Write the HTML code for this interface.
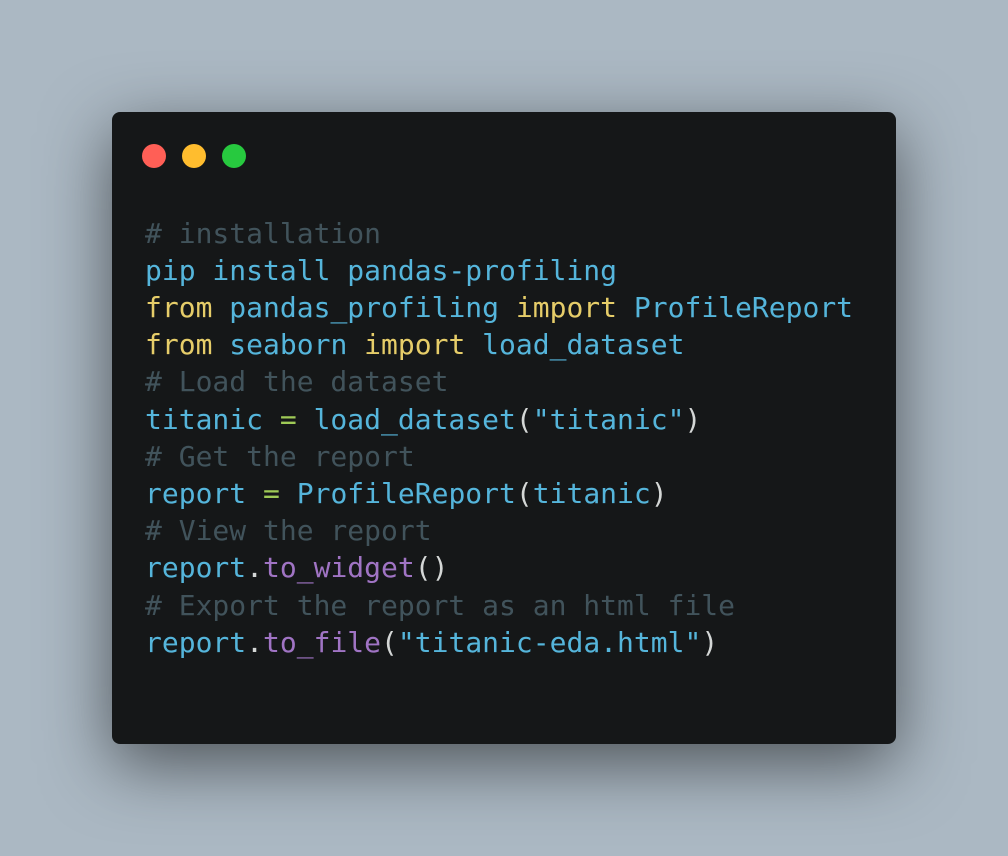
<!DOCTYPE html>
<html><head><meta charset="utf-8"><style>
html,body{margin:0;padding:0;}
body{width:1008px;height:856px;background:#abb8c3;position:relative;overflow:hidden;}
.win{position:absolute;left:112px;top:112px;width:784px;height:632px;background:#151718;border-radius:8px;box-shadow:0 20px 68px rgba(0,0,0,0.55);}
.dot{position:absolute;top:32px;width:24px;height:24px;border-radius:50%;}
pre{position:absolute;left:33px;top:102.5px;margin:0;font-family:"DejaVu Sans Mono","Liberation Mono",monospace;font-size:28px;line-height:37.2px;color:#55b5db;white-space:pre;}
.c{color:#41535b}.y{color:#e6cd69}.g{color:#9fca56}.p{color:#a074c4}.w{color:#d4d7d6}
</style></head><body>
<div class="win">
<div class="dot" style="left:30px;background:#ff5f56"></div>
<div class="dot" style="left:70px;background:#ffbd2e"></div>
<div class="dot" style="left:110px;background:#27c93f"></div>
<pre><span class="c"># installation</span>
pip install pandas-profiling
<span class="y">from</span> pandas_profiling <span class="y">import</span> ProfileReport
<span class="y">from</span> seaborn <span class="y">import</span> load_dataset
<span class="c"># Load the dataset</span>
titanic <span class="g">=</span> load_dataset<span class="w">(</span>"titanic"<span class="w">)</span>
<span class="c"># Get the report</span>
report <span class="g">=</span> ProfileReport<span class="w">(</span>titanic<span class="w">)</span>
<span class="c"># View the report</span>
report<span class="w">.</span><span class="p">to_widget</span><span class="w">()</span>
<span class="c"># Export the report as an html file</span>
report<span class="w">.</span><span class="p">to_file</span><span class="w">(</span>"titanic-eda.html"<span class="w">)</span></pre>
</div>
</body></html>
